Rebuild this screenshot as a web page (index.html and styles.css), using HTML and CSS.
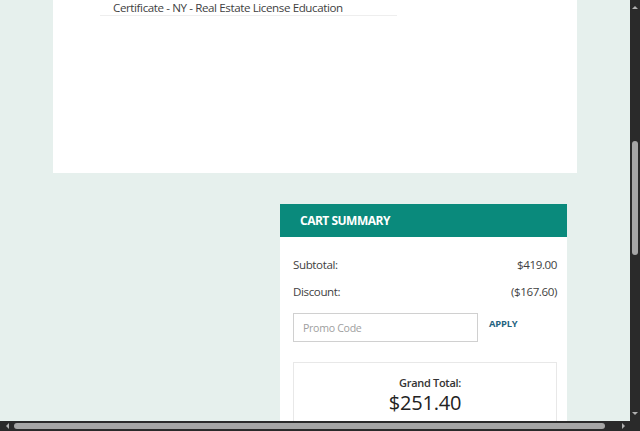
FILE: index.html
```html
<!DOCTYPE html>
<html lang="en">
<head>
<meta charset="utf-8">
<title>Cart Summary</title>
<link rel="stylesheet" href="styles.css">
</head>
<body>
<div class="screen">
  <div class="viewport">
    <div class="card">
      <div class="item-line">Certificate - NY - Real Estate License Education</div>
    </div>
    <div class="summary">
      <div class="summary-head">CART SUMMARY</div>
      <div class="summary-body">
        <div class="row"><span>Subtotal:</span><span>$419.00</span></div>
        <div class="row"><span>Discount:</span><span>($167.60)</span></div>
        <div class="promo">
          <input class="promo-input" type="text" placeholder="Promo Code">
          <span class="apply">APPLY</span>
        </div>
        <div class="total-box">
          <div class="total-label">Grand Total:</div>
          <div class="total-value">$251.40</div>
        </div>
      </div>
    </div>
  </div>
  <div class="vscroll">
    <span class="tri tri-up"></span>
    <span class="vthumb"></span>
    <span class="vspacer"></span>
    <span class="tri tri-down"></span>
  </div>
  <div class="hscroll">
    <span class="tri tri-left"></span>
    <span class="hthumb"></span>
    <span class="tri tri-right"></span>
  </div>
  <div class="corner"></div>
</div>
</body>
</html>
```
FILE: styles.css
```css
html, body {
  margin: 0;
  padding: 0;
}
body {
  width: 640px;
  height: 431px;
  overflow: hidden;
  font-family: "Open Sans", "Noto Sans", sans-serif;
  color: #444;
}
.screen {
  display: grid;
  grid-template-columns: 630px 10px;
  grid-template-rows: 421px 10px;
  width: 640px;
  height: 431px;
}
.viewport {
  overflow: hidden;
  background: #e6f0ed;
}
.card {
  margin-left: 53px;
  width: 477px;
  height: 173px;
  background: #fff;
  padding-left: 47px;
}
.item-line {
  width: 284px;
  padding-left: 13px;
  font-size: 11.6px;
  letter-spacing: -0.4px;
  line-height: 15px;
  border-bottom: 1px solid #eeeeee;
  color: #3f3f3f;
  white-space: nowrap;
}
.summary {
  margin-left: 280px;
  margin-top: 31px;
  width: 287px;
  background: #fff;
  height: 220px;
}
.summary-head {
  height: 33px;
  line-height: 33px;
  background: #0a8a7c;
  color: #fff;
  font-weight: 700;
  font-size: 12px;
  letter-spacing: -0.5px;
  padding-left: 20px;
}
.summary-body {
  padding: 14px 10px 0 13px;
}
.row {
  display: flex;
  justify-content: space-between;
  height: 27px;
  line-height: 27px;
  font-size: 11.6px;
  letter-spacing: -0.4px;
  color: #3f3f3f;
}
.promo {
  display: flex;
  align-items: flex-start;
  gap: 11px;
  margin-top: 8px;
}
.promo-input {
  box-sizing: border-box;
  width: 185px;
  height: 29px;
  margin: 0;
  border: 1px solid #d0d0d0;
  border-radius: 0;
  padding: 0 9px;
  font-family: "Open Sans", "Noto Sans", sans-serif;
  font-size: 10.6px;
  letter-spacing: -0.3px;
  color: #444;
  outline: none;
}
.promo-input::placeholder {
  color: #a0a0a0;
}
.apply {
  font-weight: 700;
  font-size: 9.4px;
  letter-spacing: -0.2px;
  color: #1f6380;
  line-height: 12px;
  padding-top: 5px;
}
.total-box {
  margin-top: 20px;
  border: 1px solid #e8e8e8;
  height: 70px;
  text-align: center;
  padding-top: 13px;
}
.total-label {
  font-size: 11px;
  font-weight: 600;
  letter-spacing: -0.3px;
  line-height: 14px;
  color: #333;
  padding-left: 10px;
}
.total-value {
  font-size: 20px;
  font-weight: 500;
  letter-spacing: -0.2px;
  line-height: 24px;
  color: #222;
  margin-top: 1px;
}
.vscroll {
  background: #2a2a2a;
  display: flex;
  flex-direction: column;
  align-items: center;
}
.vthumb {
  width: 6px;
  height: 114px;
  margin-top: 132px;
  background: #a6a6a6;
  border-radius: 3px;
}
.vspacer {
  flex: 1;
}
.hscroll {
  background: #2a2a2a;
  display: flex;
  align-items: center;
}
.hthumb {
  width: 591px;
  height: 6px;
  margin-left: 5px;
  background: #a6a6a6;
  border-radius: 3px;
}
.corner {
  background: #2a2a2a;
}
.tri {
  display: block;
  width: 0;
  height: 0;
  border-style: solid;
}
.tri-up {
  margin-top: 6px;
  border-width: 0 3px 3px 3px;
  border-color: transparent transparent #b0b0b0 transparent;
}
.tri-down {
  margin-bottom: 6px;
  border-width: 3px 3px 0 3px;
  border-color: #b0b0b0 transparent transparent transparent;
}
.tri-left {
  margin-left: 6px;
  border-width: 3px 3px 3px 0;
  border-color: transparent #b0b0b0 transparent transparent;
}
.tri-right {
  margin-left: 17px;
  border-width: 3px 0 3px 3px;
  border-color: transparent transparent transparent #b0b0b0;
}
```
